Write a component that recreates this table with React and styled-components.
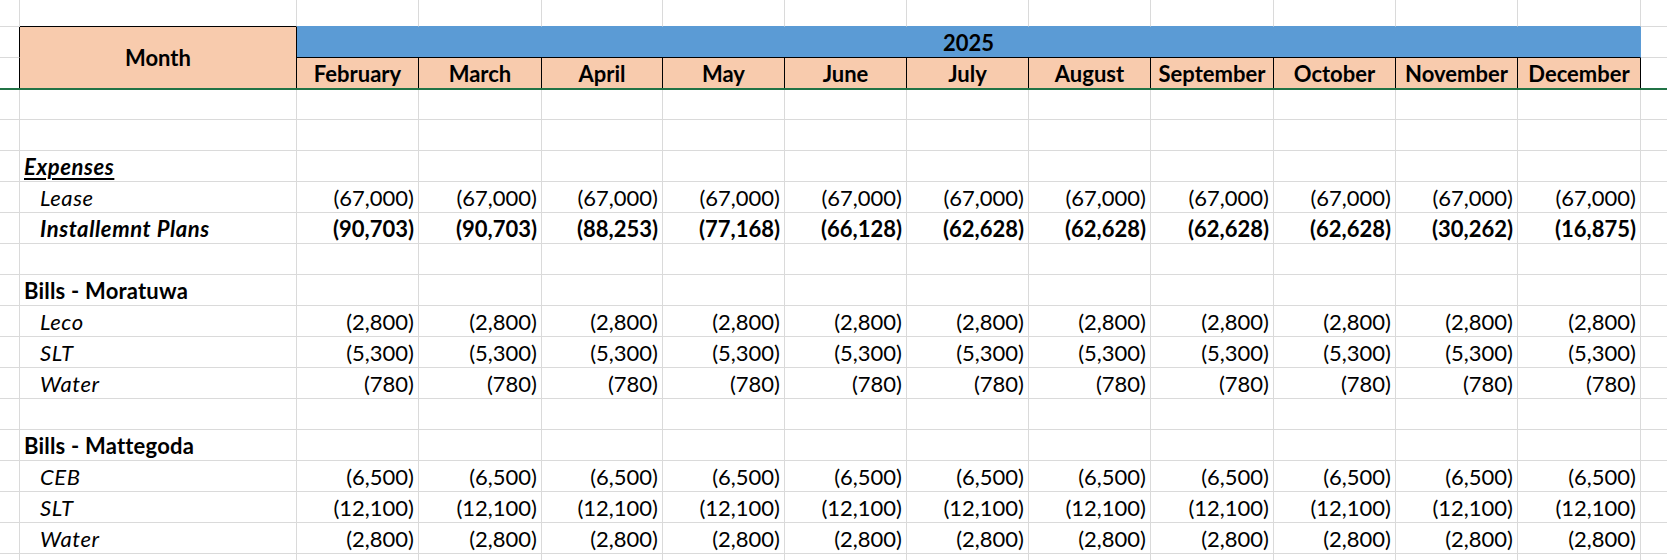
import React from "react";
import styled, { createGlobalStyle } from "styled-components";

const C = {
  grid: "#dadada",
  black: "#000000",
  peach: "#f8cbad",
  blue: "#5b9bd5",
  freeze: "#217346",
};

const COLUMNS =
  "20px 277px 122px 123px 121px 122px 122px 122px 122px 123px 122px 122px 123px 1fr";

const MONTHS = [
  "February",
  "March",
  "April",
  "May",
  "June",
  "July",
  "August",
  "September",
  "October",
  "November",
  "December",
];

const rep = (v) => Array(11).fill(v);

const BODY = [
  { type: "blank" },
  { type: "blank" },
  { type: "label", text: "Expenses", section: true, underline: true, italic: true },
  { type: "item", text: "Lease", values: rep("(67,000)") },
  {
    type: "item",
    text: "Installemnt Plans",
    bold: true,
    values: [
      "(90,703)",
      "(90,703)",
      "(88,253)",
      "(77,168)",
      "(66,128)",
      "(62,628)",
      "(62,628)",
      "(62,628)",
      "(62,628)",
      "(30,262)",
      "(16,875)",
    ],
  },
  { type: "blank" },
  { type: "label", text: "Bills - Moratuwa", section: true },
  { type: "item", text: "Leco", values: rep("(2,800)") },
  { type: "item", text: "SLT", values: rep("(5,300)") },
  { type: "item", text: "Water", values: rep("(780)") },
  { type: "blank" },
  { type: "label", text: "Bills - Mattegoda", section: true },
  { type: "item", text: "CEB", values: rep("(6,500)") },
  { type: "item", text: "SLT", values: rep("(12,100)") },
  { type: "item", text: "Water", values: rep("(2,800)") },
  { type: "blank" },
];

const GlobalStyle = createGlobalStyle`
  html, body {
    margin: 0;
    padding: 0;
    background: #ffffff;
  }
  body {
    font-family: Lato, "Open Sans", "Liberation Sans", sans-serif;
    color: #000000;
    overflow: hidden;
  }
`;

const Sheet = styled.div`
  width: 1667px;
  height: 560px;
  overflow: hidden;
  display: flex;
  flex-direction: column;
  background: #ffffff;
`;

const Grid = styled.div`
  flex: none;
  display: grid;
  grid-template-columns: ${COLUMNS};
  grid-template-rows: ${(p) => p.$rows};
`;

const FreezeLine = styled.div`
  flex: none;
  height: 2px;
  background: ${C.freeze};
`;

const Cell = styled.div`
  box-sizing: border-box;
  min-width: 0;
  display: flex;
  align-items: flex-end;
  overflow: hidden;
  white-space: nowrap;
  border-right: ${(p) => (p.$last ? "none" : `1px solid ${p.$right || C.grid}`)};
  border-bottom: ${(p) => (p.$noBottom ? "none" : `1px solid ${p.$bottom || C.grid}`)};
  background: ${(p) => p.$bg || "transparent"};
`;

const HeaderText = styled(Cell)`
  justify-content: center;
  font-size: 22px;
  line-height: 1.2;
  font-weight: 700;
  padding-bottom: 1px;
`;

const MonthTitle = styled(HeaderText)`
  grid-row: span 2;
  align-items: center;
  padding-top: 2px;
  padding-bottom: 0;
`;

const YearBand = styled(HeaderText)`
  grid-column: span 11;
`;

const Label = styled(Cell)`
  font-size: 22px;
  line-height: 1.2;
  padding-bottom: 1px;
  padding-left: ${(p) => (p.$section ? "4px" : "20px")};
  font-weight: ${(p) => (p.$bold ? 700 : 400)};
  font-style: ${(p) => (p.$italic ? "italic" : "normal")};
  letter-spacing: ${(p) => (p.$italic ? "0.6px" : "0.2px")};
`;

const Underlined = styled.span`
  text-decoration: underline;
  text-decoration-thickness: 2px;
  text-underline-offset: 3px;
`;

const Value = styled(Cell)`
  justify-content: flex-end;
  font-size: 22px;
  line-height: 1.2;
  padding-bottom: 1px;
  padding-right: 4px;
  font-weight: ${(p) => (p.$bold ? 700 : 400)};
`;

function Header() {
  return (
    <Grid $rows="27px 31px 30px">
      <Cell />
      <Cell $bottom={C.black} />
      {MONTHS.map((m) => (
        <Cell key={"t" + m} $bottom={C.blue} />
      ))}
      <Cell $last />

      <Cell $right={C.black} />
      <MonthTitle $bg={C.peach} $right={C.black} $noBottom>
        Month
      </MonthTitle>
      <YearBand $bg={C.blue} $right={C.blue} $bottom={C.black}>
        2025
      </YearBand>
      <Cell $last />

      <Cell $right={C.black} $noBottom />
      {MONTHS.map((m) => (
        <HeaderText key={m} $bg={C.peach} $right={C.black} $noBottom>
          {m}
        </HeaderText>
      ))}
      <Cell $last $noBottom />
    </Grid>
  );
}

function BodyRow({ row }) {
  const values = row.values || rep("");
  return (
    <>
      <Cell />
      <Label
        $section={row.section}
        $bold={row.section || row.bold}
        $italic={row.italic || row.type === "item"}
      >
        {row.underline ? <Underlined>{row.text}</Underlined> : row.text}
      </Label>
      {values.map((v, i) => (
        <Value key={i} $bold={row.bold}>
          {v}
        </Value>
      ))}
      <Cell $last />
    </>
  );
}

export default function App() {
  return (
    <>
      <GlobalStyle />
      <Sheet>
        <Header />
        <FreezeLine />
        <Grid $rows={`30px repeat(${BODY.length - 1}, 31px)`}>
          {BODY.map((row, i) => (
            <BodyRow key={i} row={row} />
          ))}
        </Grid>
      </Sheet>
    </>
  );
}
